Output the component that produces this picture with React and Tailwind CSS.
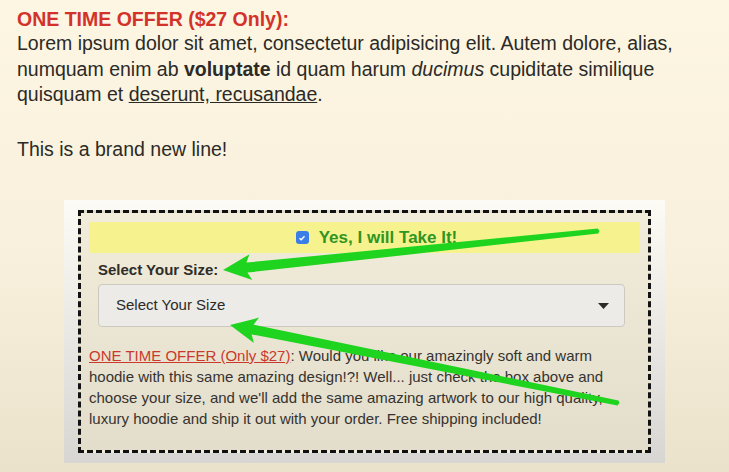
import React from "react";

function Arrows() {
  return (
    <svg
      className="pointer-events-none absolute left-0 top-0"
      width="729"
      height="472"
      viewBox="0 0 729 472"
    >
      {/* arrow to "Select Your Size:" */}
      <polygon
        fill="#1fd41f"
        points="223,270 249.5,254.3 246.4,262.6 597.7,228.5 599.5,231 598.3,233.5 247.4,272.6 252.3,280.1"
      />
      {/* arrow to the select box */}
      <polygon
        fill="#1fd41f"
        points="230,325 259.1,317.6 253.6,324.6 618.5,400.5 619.5,403 617.5,405.5 251.6,334.4 253.9,343"
      />
    </svg>
  );
}

export default function App() {
  return (
    <div
      className="relative h-[472px] w-[729px] overflow-hidden bg-[linear-gradient(180deg,#fdf6e3_0%,#f8f0dc_55%,#ebe2cb_100%)] text-[#2b2a27]"
      style={{ fontFamily: '"Liberation Sans", Arial, sans-serif' }}
    >
      <div className="px-[17px] pt-[7px]">
        <h2 className="text-[19.5px] font-bold leading-[24px] text-[#d3322b]">
          ONE TIME OFFER ($27 Only):
        </h2>
        <p className="text-[19.5px] leading-[25.5px]">
          Lorem ipsum dolor sit amet, consectetur adipisicing elit. Autem dolore, alias, numquam
          enim ab <strong>voluptate</strong> id quam harum <em>ducimus</em> cupiditate similique
          quisquam et <u>deserunt, recusandae</u>.
        </p>
        <p className="mt-[29px] text-[19.5px] leading-[25.5px]">This is a brand new line!</p>
      </div>

      {/* Upsell box */}
      <div className="mx-auto mt-[38px] w-[601px] bg-gradient-to-b from-[#fdfbf5] to-[#d7d6d3] px-[14px] pb-[10px] pt-[10px]">
        <div className="border-[3px] border-dashed border-[#111] bg-gradient-to-b from-[#f2eddb] to-[#e3ddcb] px-[8px] pb-[21px] pt-[9px]">
          <label className="flex h-[31px] items-center justify-center gap-[10px] bg-[#f6f38f] pl-[24px] text-[17px] font-bold text-[#2f961f]">
            <span className="flex h-[13px] w-[13px] items-center justify-center rounded-[3px] bg-[#3a7fe8]">
              <svg width="8" height="8" viewBox="0 0 8 8">
                <path d="M1.5 4.2 L3.2 5.8 L6.5 2.2" fill="none" stroke="#fff" strokeWidth="1.3" />
              </svg>
            </span>
            Yes, I will Take It!
          </label>

          <div className="pl-[9px] pr-[15px]">
            <div className="mt-[8px] text-[15px] font-bold leading-[18px] text-[#2e2d2a]">
              Select Your Size:
            </div>
            <div className="mt-[5px] flex h-[43px] items-center justify-between rounded-[4px] border border-[#cdc9c1] bg-[#ecebe7] pl-[17px] pr-[15px] text-[15px] text-[#2b2a27]">
              <span>Select Your Size</span>
              <svg width="11" height="6" viewBox="0 0 11 6">
                <path d="M0 0 L11 0 L5.5 6 Z" fill="#2b2a27" />
              </svg>
            </div>
          </div>

          <p className="mt-[18px] pr-[13px] text-[15px] leading-[21px] text-[#35332f]">
            <span className="text-[#c93a2c] underline">ONE TIME OFFER (Only $27)</span>: Would you
            like our amazingly soft and warm hoodie with this same amazing design!?! Well... just
            check the box above and choose your size, and we'll add the same amazing artwork to our
            high quality, luxury hoodie and ship it out with your order. Free shipping included!
          </p>
        </div>
      </div>

      <Arrows />
    </div>
  );
}
